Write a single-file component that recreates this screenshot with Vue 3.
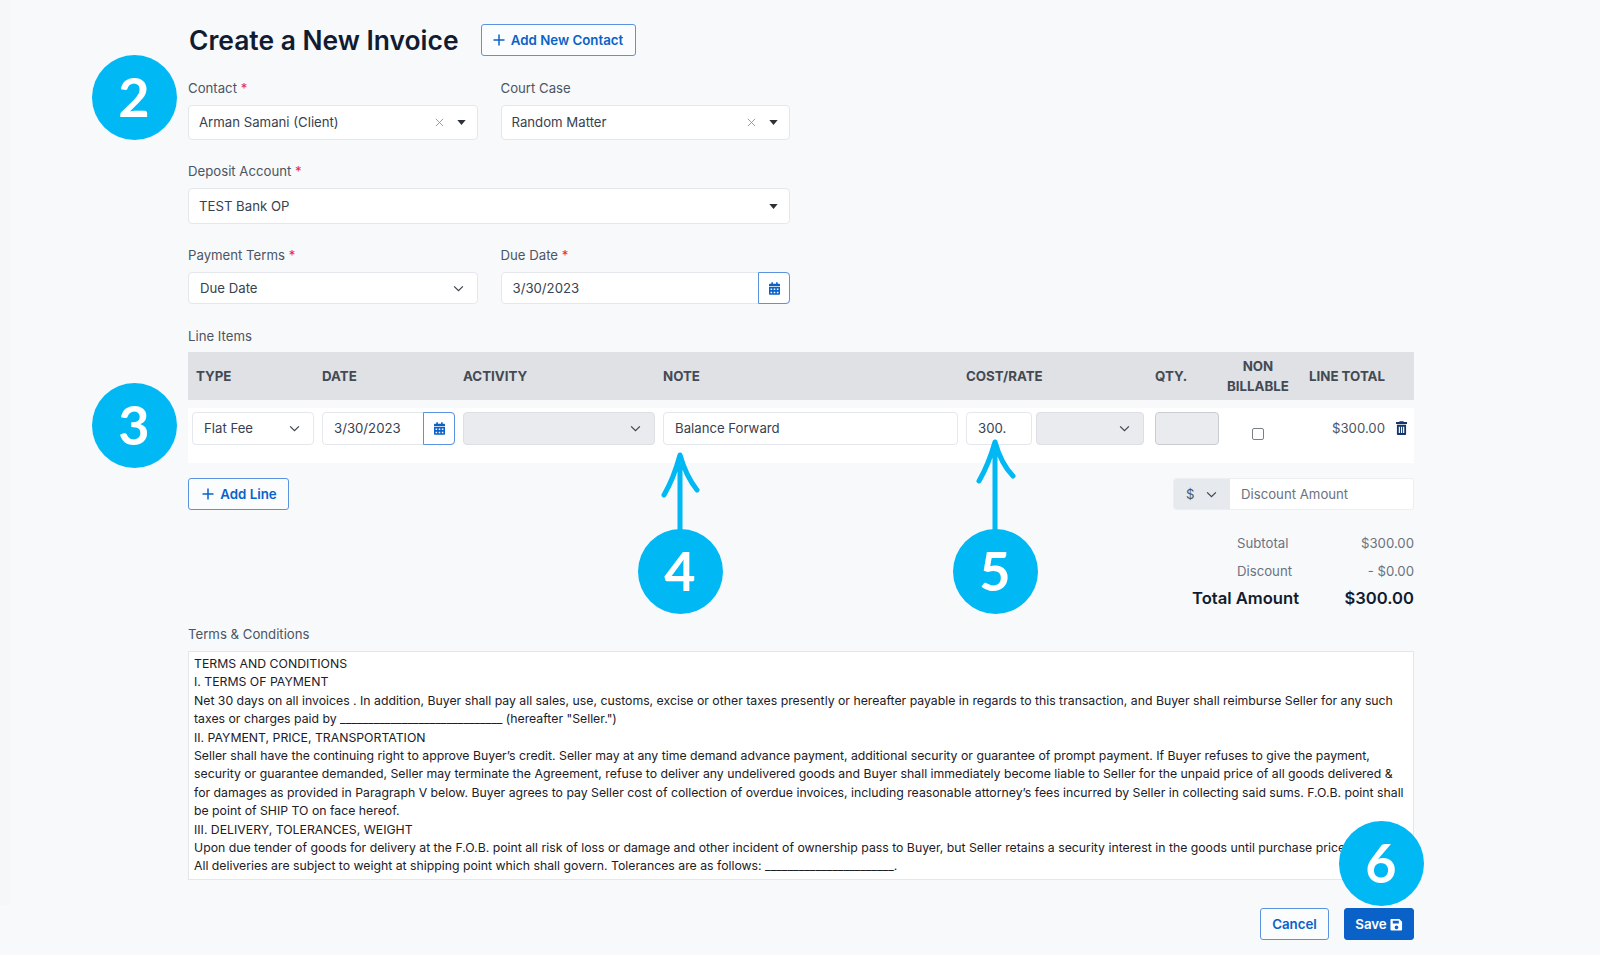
<script setup>
const terms = [
  'TERMS AND CONDITIONS',
  'I. TERMS OF PAYMENT',
  'Net 30 days on all invoices . In addition, Buyer shall pay all sales, use, customs, excise or other taxes presently or hereafter payable in regards to this transaction, and Buyer shall reimburse Seller for any such',
  'taxes or charges paid by _____________________________ (hereafter "Seller.")',
  'II. PAYMENT, PRICE, TRANSPORTATION',
  'Seller shall have the continuing right to approve Buyer’s credit. Seller may at any time demand advance payment, additional security or guarantee of prompt payment. If Buyer refuses to give the payment,',
  'security or guarantee demanded, Seller may terminate the Agreement, refuse to deliver any undelivered goods and Buyer shall immediately become liable to Seller for the unpaid price of all goods delivered &',
  'for damages as provided in Paragraph V below. Buyer agrees to pay Seller cost of collection of overdue invoices, including reasonable attorney’s fees incurred by Seller in collecting said sums. F.O.B. point shall',
  'be point of SHIP TO on face hereof.',
  'III. DELIVERY, TOLERANCES, WEIGHT',
  'Upon due tender of goods for delivery at the F.O.B. point all risk of loss or damage and other incident of ownership pass to Buyer, but Seller retains a security interest in the goods until purchase price',
  'All deliveries are subject to weight at shipping point which shall govern. Tolerances are as follows: _______________________.',
]

const badges = [
  { n: 2, x: 134, y: 97 },
  { n: 3, x: 134, y: 425 },
  { n: 4, x: 680, y: 571 },
  { n: 5, x: 995, y: 571 },
  { n: 6, x: 1381, y: 863 },
]
</script>

<template>
  <div class="page">
    <div class="edge"></div>
    <main class="form">
      <div class="title-row">
        <h1>Create a New Invoice</h1>
        <button class="btn outline add-contact">
          <svg class="plus" viewBox="0 0 12 12"><path d="M6 .5v11M.5 6h11" /></svg>
          Add New Contact
        </button>
      </div>

      <div class="two-col first">
        <div>
          <label>Contact <span class="req">*</span></label>
          <div class="box tall">
            <span class="val">Arman Samani (Client)</span>
            <svg class="clear" viewBox="0 0 10 10"><path d="M1 1l8 8M9 1l-8 8" /></svg>
            <svg class="caret" viewBox="0 0 10 6"><path d="M0 0h10L5 6z" /></svg>
          </div>
        </div>
        <div>
          <label>Court Case</label>
          <div class="box tall">
            <span class="val">Random Matter</span>
            <svg class="clear" viewBox="0 0 10 10"><path d="M1 1l8 8M9 1l-8 8" /></svg>
            <svg class="caret" viewBox="0 0 10 6"><path d="M0 0h10L5 6z" /></svg>
          </div>
        </div>
      </div>

      <div class="field-wide">
        <label>Deposit Account <span class="req">*</span></label>
        <div class="box deposit">
          <span class="val">TEST Bank OP</span>
          <svg class="caret" viewBox="0 0 10 6"><path d="M0 0h10L5 6z" /></svg>
        </div>
      </div>

      <div class="two-col third">
        <div>
          <label>Payment Terms <span class="req">*</span></label>
          <div class="box short pad12">
            <span class="val">Due Date</span>
            <svg class="chev" viewBox="0 0 12 8"><path d="M1 1.5l5 5 5-5" /></svg>
          </div>
        </div>
        <div>
          <label>Due Date <span class="req">*</span></label>
          <div class="box short date pad12">
            <span class="val">3/30/2023</span>
            <span class="cal-btn">
              <svg class="cal" viewBox="0 0 14 16"><path fill-rule="evenodd" d="M3 0h2v2h4V0h2v2h2a1 1 0 0 1 1 1v2H0V3a1 1 0 0 1 1-1h2zM0 6h14v9a1 1 0 0 1-1 1H1a1 1 0 0 1-1-1zm2 2v2h2V8zm4 0v2h2V8zm4 0v2h2V8zm-8 4v2h2v-2zm4 0v2h2v-2zm4 0v2h2v-2z" /></svg>
            </span>
          </div>
        </div>
      </div>

      <label class="line-label">Line Items</label>
      <div class="grid-cols thead">
        <span class="th first-th">TYPE</span>
        <span class="th">DATE</span>
        <span class="th">ACTIVITY</span>
        <span class="th">NOTE</span>
        <span class="th">COST/RATE</span>
        <span class="th">QTY.</span>
        <span class="th center">NON<br />BILLABLE</span>
        <span class="th total-th">LINE TOTAL</span>
      </div>

      <div class="grid-cols trow">
        <div class="cell first-cell">
          <div class="box short pad12 grow">
            <span class="val">Flat Fee</span>
            <svg class="chev" viewBox="0 0 12 8"><path d="M1 1.5l5 5 5-5" /></svg>
          </div>
        </div>
        <div class="cell">
          <div class="box short date pad12 grow">
            <span class="val">3/30/2023</span>
            <span class="cal-btn">
              <svg class="cal" viewBox="0 0 14 16"><path fill-rule="evenodd" d="M3 0h2v2h4V0h2v2h2a1 1 0 0 1 1 1v2H0V3a1 1 0 0 1 1-1h2zM0 6h14v9a1 1 0 0 1-1 1H1a1 1 0 0 1-1-1zm2 2v2h2V8zm4 0v2h2V8zm4 0v2h2V8zm-8 4v2h2v-2zm4 0v2h2v-2zm4 0v2h2v-2z" /></svg>
            </span>
          </div>
        </div>
        <div class="cell">
          <div class="box short off grow">
            <span class="val"></span>
            <svg class="chev" viewBox="0 0 12 8"><path d="M1 1.5l5 5 5-5" /></svg>
          </div>
        </div>
        <div class="cell">
          <div class="box short pad12 grow"><span class="val">Balance Forward</span></div>
        </div>
        <div class="cell cost">
          <div class="box short cost-input"><span class="val">300.</span></div>
          <div class="box short off unit">
            <span class="val"></span>
            <svg class="chev" viewBox="0 0 12 8"><path d="M1 1.5l5 5 5-5" /></svg>
          </div>
        </div>
        <div class="cell"><div class="box short off qty"></div></div>
        <div class="cell check-cell"><span class="check"></span></div>
        <div class="cell total-cell">
          <span>$300.00</span>
          <svg class="trash" viewBox="0 0 12 15"><path fill-rule="evenodd" d="M4 0h4l.6 1H12v2H0V1h3.4zM1 4h10v10a1 1 0 0 1-1 1H2a1 1 0 0 1-1-1zm2 2v7h1.3V6zm2.4 0v7h1.3V6zm2.3 0v7H9V6z" /></svg>
        </div>
      </div>

      <div class="actions">
        <button class="btn outline add-line">
          <svg class="plus" viewBox="0 0 12 12"><path d="M6 .5v11M.5 6h11" /></svg>
          Add Line
        </button>
        <div class="discount">
          <span class="prefix">
            $
            <svg class="chev" viewBox="0 0 12 8"><path d="M1 1.5l5 5 5-5" /></svg>
          </span>
          <span class="placeholder">Discount Amount</span>
        </div>
      </div>

      <div class="totals">
        <div class="tot-row"><span>Subtotal</span><span>$300.00</span></div>
        <div class="tot-row"><span>Discount</span><span>- $0.00</span></div>
        <div class="tot-row grand"><span>Total Amount</span><span>$300.00</span></div>
      </div>

      <label class="terms-label">Terms &amp; Conditions</label>
      <div class="terms">
        <div v-for="(line, i) in terms" :key="i" class="terms-line">{{ line }}</div>
      </div>

      <div class="footer">
        <button class="btn outline cancel">Cancel</button>
        <button class="btn solid save">
          Save
          <svg class="floppy" viewBox="0 0 14 14"><path fill-rule="evenodd" d="M1.5 1H10l3 3v8.5a1 1 0 0 1-1 1H1.5a1 1 0 0 1-1-1V2a1 1 0 0 1 1-1zM3 3v3h6.5V3zm4 5a2 2 0 1 0 0 4 2 2 0 0 0 0-4z" /></svg>
        </button>
      </div>
    </main>

    <svg class="arrows" viewBox="0 0 1600 955" width="1600" height="955">
      <path d="M680 530V456M664 495c7-12 12-25 16-40 4 14 9 25 17 35" />
      <path d="M995 530V443M979 481c7-12 12-25 16-39 4 14 9 25 18 34" />
    </svg>
    <div
      v-for="b in badges"
      :key="b.n"
      class="badge"
      :style="{ left: b.x - 42.5 + 'px', top: b.y - 42.5 + 'px' }"
    >{{ b.n }}</div>
  </div>
</template>

<style scoped>
.page {
  position: relative;
  width: 1600px;
  height: 955px;
  overflow: hidden;
  background: #f8f9fb;
  font-family: Inter, "Liberation Sans", sans-serif;
  color: #4b5563;
  font-size: 13.2px;
}

.edge {
  position: absolute;
  left: 0;
  top: 0;
  width: 10px;
  height: 905px;
  background: #f6f7f9;
}

.form {
  position: relative;
  width: 1226px;
  margin-left: 188px;
  padding-top: 24px;
}

.title-row {
  display: flex;
  align-items: center;
  height: 32px;
  gap: 22px;
}

h1 {
  margin: -1px 0 0;
  padding-left: 1px;
  font-size: 26.4px;
  font-weight: 600;
  color: #111c30;
  line-height: 32px;
}

label {
  display: block;
  line-height: 20px;
  margin-bottom: 7px;
  color: #4b5563;
}

.req {
  color: #e5283a;
}

.btn {
  display: inline-flex;
  align-items: center;
  justify-content: center;
  height: 32px;
  padding: 0;
  border-radius: 3px;
  font-family: inherit;
  font-size: 13.3px;
  font-weight: 600;
  box-sizing: border-box;
}

.outline {
  border: 1px solid #5b93e0;
  background: #fbfcfe;
  color: #0a62c8;
}

.solid {
  border: 1px solid #0a62c8;
  background: #0a62c8;
  color: #fff;
}

.plus {
  width: 12px;
  height: 12px;
  margin-right: 6px;
  fill: none;
  stroke: currentColor;
  stroke-width: 1.5;
}

.add-contact {
  width: 155px;
}

.two-col {
  display: grid;
  grid-template-columns: 289.5px 289.5px;
  column-gap: 23px;
}

.first {
  margin-top: 22px;
}

.field-wide {
  width: 602px;
  margin-top: 21px;
}

.third {
  margin-top: 21px;
}

.box {
  display: flex;
  align-items: center;
  box-sizing: border-box;
  background: #fff;
  border: 1px solid #e4e7eb;
  border-radius: 4px;
  padding: 0 10px;
  color: #374151;
  height: 34px;
}

.box .val {
  position: relative;
  top: -0.5px;
}

.tall {
  height: 35px;
}

.deposit {
  height: 36px;
}

.short {
  height: 33px;
}

.third .short {
  height: 32px;
}

.pad12 {
  padding-left: 11px;
  padding-right: 13px;
}

.val {
  flex: 1;
  white-space: nowrap;
}

.clear {
  width: 9px;
  height: 9px;
  margin-right: 13px;
  fill: none;
  stroke: #8b929c;
  stroke-width: 1;
}

.caret {
  width: 9px;
  height: 5px;
  margin-right: 1px;
  fill: #2b3138;
}

.chev {
  width: 11px;
  height: 7px;
  flex: none;
  fill: none;
  stroke: #3d444e;
  stroke-width: 1.4;
}

.off .chev {
  margin-right: 3px;
}

.date {
  padding-right: 0;
  position: relative;
}

.cal-btn {
  align-self: stretch;
  width: 32px;
  margin: -1px -1px -1px 0;
  display: flex;
  align-items: center;
  justify-content: center;
  border: 1px solid #5b93e0;
  border-radius: 0 4px 4px 0;
  flex: none;
  box-sizing: border-box;
}

.cal {
  width: 11px;
  height: 13px;
  fill: #0a62c8;
}

.line-label {
  margin: 22px 0 6px;
}

.grid-cols {
  display: grid;
  grid-template-columns: 134px 141px 200px 303px 189px 70px 66px 123px;
}

.thead {
  height: 48px;
  background: #dfe1e4;
  align-items: center;
  margin-bottom: 8px;
}

.th {
  font-size: 13.3px;
  font-weight: 700;
  color: #434a54;
  line-height: 20px;
}

.first-th {
  padding-left: 8px;
}

.center {
  text-align: center;
}

.total-th {
  padding-left: 18px;
}

.trow {
  height: 55px;
  background: #fff;
  padding-top: 4px;
  box-sizing: border-box;
}

.cell {
  display: flex;
  align-items: flex-start;
}

.first-cell {
  padding-left: 4px;
}

.grow {
  width: 100%;
  margin-right: 8px;
}

.off {
  background: #e9ebee;
  border-color: #dcdfe3;
}

.cost-input {
  width: 66px;
  padding: 0 11px;
  margin-right: 4px;
}

.unit {
  width: 108px;
}

.qty {
  width: 64px;
  border-color: #c9ccd1;
}

.check-cell {
  justify-content: center;
  padding-top: 16px;
}

.check {
  width: 12px;
  height: 12px;
  box-sizing: border-box;
  border: 1px solid #7b8087;
  border-radius: 2px;
  background: #fff;
}

.total-cell {
  justify-content: flex-end;
  padding-right: 29px;
  padding-top: 8px;
  line-height: 17px;
  position: relative;
}

.trash {
  position: absolute;
  right: 7px;
  top: 9px;
  width: 11px;
  height: 14px;
  fill: #14356e;
}

.actions {
  display: flex;
  justify-content: space-between;
  margin-top: 15px;
}

.add-line {
  width: 101px;
}

.add-line .plus {
  margin-left: 2px;
}

.discount {
  display: flex;
  width: 241px;
  height: 32px;
  box-sizing: border-box;
  border: 1px solid #eceef1;
  border-radius: 3px;
  background: #fff;
  overflow: hidden;
}

.prefix {
  display: flex;
  align-items: center;
  gap: 12px;
  width: 56px;
  margin: -1px 0;
  padding-left: 12px;
  box-sizing: border-box;
  background: #e6e9ed;
}

.placeholder {
  align-self: center;
  padding-left: 11px;
  color: #6b7280;
}

.totals {
  width: 177px;
  margin: 23px 0 0 auto;
  color: #6b7280;
}

.tot-row {
  display: flex;
  justify-content: space-between;
  height: 28px;
  line-height: 20px;
}

.tot-row.grand {
  width: 222px;
  margin-left: -45px;
  height: 26px;
  line-height: 26px;
  font-size: 16.6px;
  font-weight: 600;
  color: #111c30;
  margin-top: -4px;
}

.terms-label {
  margin: 13px 0 7px;
}

.terms {
  height: 229px;
  box-sizing: border-box;
  overflow: hidden;
  background: #fff;
  border: 1px solid #e4e6e9;
  padding: 3px 5px;
  color: #1b2027;
  font-size: 12.27px;
  line-height: 18.4px;
}

.terms-line {
  white-space: nowrap;
}

.footer {
  display: flex;
  justify-content: flex-end;
  gap: 15px;
  margin-top: 28px;
}

.cancel {
  width: 69px;
}

.save {
  width: 70px;
}

.floppy {
  width: 13px;
  height: 13px;
  margin-left: 3px;
  fill: #fff;
}

.arrows {
  position: absolute;
  left: 0;
  top: 0;
  pointer-events: none;
  fill: none;
  stroke: #00b8f4;
  stroke-width: 5;
  stroke-linecap: round;
  stroke-linejoin: round;
}

.badge {
  position: absolute;
  width: 85px;
  height: 85px;
  border-radius: 50%;
  background: #00b8f4;
  color: #fff;
  display: flex;
  align-items: center;
  justify-content: center;
  font-family: Lato, "Noto Sans", sans-serif;
  font-weight: 700;
  font-size: 54px;
  line-height: 1;
}
</style>
